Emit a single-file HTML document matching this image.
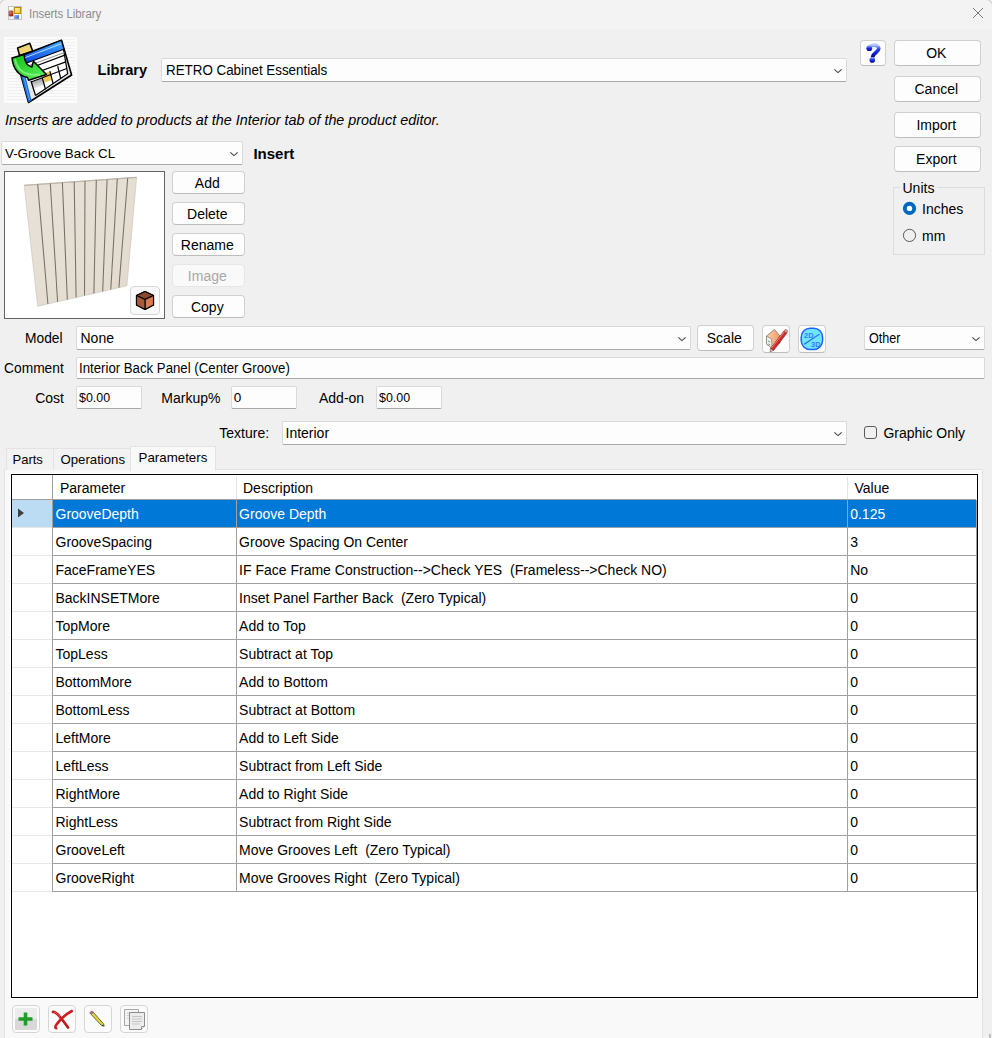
<!DOCTYPE html>
<html><head><meta charset="utf-8">
<style>
*{margin:0;padding:0;box-sizing:border-box}
html,body{width:992px;height:1038px;overflow:hidden;background:#f0f0f0;font-family:"Liberation Sans",sans-serif;color:#000}
.a{position:absolute}
svg.a{overflow:visible}
.t{position:absolute;white-space:pre;line-height:1;font-size:14px}
.btn{position:absolute;background:#fdfdfd;border:1px solid #d0d0d0;border-bottom-color:#bdbdbd;border-radius:4px}
.cb{position:absolute;background:#fdfdfd;border:1px solid #d9d9d9;border-bottom-color:#a8a8a8;border-radius:2px}
.tb{position:absolute;background:#fdfdfd;border:1px solid #d9d9d9;border-bottom-color:#a8a8a8;border-radius:2px}
</style></head><body>

<div class="a" style="left:0px;top:0px;width:992px;height:29px;background:#f3f3f3"></div>
<div class="t" style="left:28.6px;top:7.60px;font-size:12px;font-weight:normal;color:#8c8c8c;transform:scaleX(0.95);transform-origin:0 0;">Inserts Library</div>
<svg class="a" style="left:8px;top:6px" width="14" height="14" viewBox="0 0 14 14">
<defs><linearGradient id="ty" x1="0" y1="0" x2="1" y2="1"><stop offset="0" stop-color="#fff4c0"/><stop offset="1" stop-color="#ffc800"/></linearGradient>
<linearGradient id="tr" x1="0" y1="0" x2="1" y2="1"><stop offset="0" stop-color="#f5a0a0"/><stop offset="1" stop-color="#a00000"/></linearGradient>
<linearGradient id="tbl" x1="0" y1="0" x2="1" y2="1"><stop offset="0" stop-color="#a8c8ff"/><stop offset="1" stop-color="#2050d0"/></linearGradient></defs>
<rect x="0.5" y="0.5" width="13" height="13" fill="#fff" stroke="#c0c0c0"/>
<path d="M5.3 0 V14 M0 4.1 H5.3 M0 10.4 H5.3 M2.5 10.4 V14 M10.9 7.8 V14" stroke="#cfcfcf" stroke-width="0.8"/>
<rect x="6.6" y="1.5" width="6" height="6" fill="url(#ty)" stroke="#b88a00" stroke-width="1"/>
<rect x="1.1" y="5" width="3.8" height="4.9" rx="0.5" fill="url(#tr)" stroke="#a01010" stroke-width="0.6"/>
<rect x="6.1" y="9" width="4.8" height="3.7" fill="url(#tbl)"/>
</svg>
<svg class="a" style="left:972px;top:7px" width="12" height="12" viewBox="0 0 12 12"><path d="M1 1 L11 11 M11 1 L1 11" stroke="#7a7a7a" stroke-width="1"/></svg>
<svg class="a" style="left:4px;top:37px" width="73" height="66" viewBox="0 0 73 66">
<defs><linearGradient id="bb" x1="0" y1="1" x2="0.3" y2="0"><stop offset="0" stop-color="#0a3ad8"/><stop offset="1" stop-color="#3aa0ff"/></linearGradient>
<linearGradient id="ag" x1="0" y1="0" x2="1" y2="1"><stop offset="0" stop-color="#10c010"/><stop offset="1" stop-color="#60f060"/></linearGradient>
<linearGradient id="gc" x1="0" y1="0" x2="0.3" y2="1"><stop offset="0" stop-color="#8a8a8a"/><stop offset="1" stop-color="#f0f0f0"/></linearGradient></defs>
<rect width="73" height="66" fill="#fbfbfb"/>
<g stroke="#f0f0f0" stroke-width="1"><line x1="3" y1="2.5" x2="71" y2="2.5"/><line x1="3" y1="5.5" x2="71" y2="5.5"/><line x1="3" y1="8.5" x2="71" y2="8.5"/><line x1="3" y1="11.5" x2="71" y2="11.5"/><line x1="3" y1="14.5" x2="71" y2="14.5"/><line x1="3" y1="17.5" x2="71" y2="17.5"/><line x1="3" y1="20.5" x2="71" y2="20.5"/><line x1="3" y1="23.5" x2="71" y2="23.5"/><line x1="3" y1="26.5" x2="71" y2="26.5"/><line x1="3" y1="29.5" x2="71" y2="29.5"/><line x1="3" y1="32.5" x2="71" y2="32.5"/><line x1="3" y1="35.5" x2="71" y2="35.5"/><line x1="3" y1="38.5" x2="71" y2="38.5"/><line x1="3" y1="41.5" x2="71" y2="41.5"/><line x1="3" y1="44.5" x2="71" y2="44.5"/><line x1="3" y1="47.5" x2="71" y2="47.5"/><line x1="3" y1="50.5" x2="71" y2="50.5"/><line x1="3" y1="53.5" x2="71" y2="53.5"/><line x1="3" y1="56.5" x2="71" y2="56.5"/><line x1="3" y1="59.5" x2="71" y2="59.5"/><line x1="3" y1="62.5" x2="71" y2="62.5"/></g>
<path d="M13.6 11 L25.8 6.3 L28.7 14.3 L15.5 18.4 Z" fill="#f2d472" stroke="#000" stroke-width="1.6" stroke-linejoin="round"/>
<path d="M12 20.5 L57.5 3.3 L67.6 38 L24.5 65.5 Z" fill="#e6e6e6" stroke="#000" stroke-width="1.6" stroke-linejoin="round"/>
<path d="M20 27 L59.5 12.5 L63.7 36.8 L31.5 58.5 L27 44 Z" fill="#fff"/>
<path d="M59.5 12.5 L63.7 36.8 L31.5 58.5" fill="none" stroke="#000" stroke-width="1.2"/>
<path d="M12 20.5 L16.5 20 L27.5 63.5 L24.5 65.5 Z" fill="#1a6ad8"/>
<path d="M15 21 L25.5 63" stroke="#60b0ff" stroke-width="0.9"/>
<path d="M27 45.5 L38.5 41 L40.2 48 L28.8 52 Z" fill="url(#gc)"/>
<path d="M38.5 37 L45.6 34.3 L47.6 43 L40.6 45.6 Z" fill="#f0c850"/>
<path d="M16 19.5 L57.5 3.3 L59.8 12.2 L20 27 Z" fill="url(#bb)" stroke="#000" stroke-width="1.1" stroke-linejoin="round"/>
<path d="M19 21.5 L57 6.8" stroke="#c8e8ff" stroke-width="0.9"/>
<path d="M21 30 L60.3 15.6" stroke="#909090" stroke-width="1"/>
<g stroke="#000" stroke-width="1.25" fill="none">
<path d="M22.5 32.5 L60.8 18.2 M24.5 38.5 L61.8 24.8 M27 45 L62.8 31.5 M27 44 L31.5 58.5 M38.2 40.5 L41.5 52.3 M45.9 34.1 L49.2 47 M53.7 29.1 L56.8 41.8"/>
</g>
<path d="M8 21 C9 32 15 39 23.5 40.5 L24.6 43.2 L42.5 37.5 L29.4 24.3 L27.8 30 C23 29 20.5 24 20 17.5 Z" fill="url(#ag)" stroke="#000" stroke-width="1.5" stroke-linejoin="round"/>
<path d="M11 22 C12.5 31 18 36 26 37.5 L36 37.8" stroke="#a0ffa0" stroke-width="2" fill="none" opacity="0.6"/>
</svg>
<div class="t" style="left:97.6px;top:62.70px;font-size:14.6px;font-weight:bold;color:#000;">Library</div>
<div class="cb" style="left:161px;top:58px;width:686px;height:24px"></div>
<div class="t" style="left:165.5px;top:63.00px;font-size:14px;font-weight:normal;color:#000;transform:scaleX(0.955);transform-origin:0 0;">RETRO Cabinet Essentials</div>
<svg class="a" style="left:833px;top:68.0px" width="10" height="6" viewBox="0 0 10 6"><path d="M1.4 1.4 L5 4.6 L8.6 1.4" fill="none" stroke="#404040" stroke-width="1.05"/></svg>
<div class="btn" style="left:860px;top:40px;width:26px;height:26px;"></div>
<div class="t" style="left:858.8px;width:26px;text-align:center;top:-12.00px;font-size:14px;color:#000"></div>
<svg class="a" style="left:860px;top:40px" width="26" height="26" viewBox="0 0 26 26">
<defs><linearGradient id="qg" x1="0" y1="0" x2="0" y2="1"><stop offset="0" stop-color="#b8c8ff"/><stop offset="0.35" stop-color="#2040f0"/><stop offset="1" stop-color="#0008a0"/></linearGradient>
<linearGradient id="qd" x1="0" y1="0" x2="0" y2="1"><stop offset="0" stop-color="#a0c0ff"/><stop offset="0.5" stop-color="#1a30e0"/><stop offset="1" stop-color="#0008a0"/></linearGradient></defs>
<path d="M9.5 8 C9.5 4.5 18.8 3.8 18.8 8.5 C18.8 12 13.5 12.8 12.6 16.8" fill="none" stroke="url(#qg)" stroke-width="3.6" stroke-linecap="round"/>
<circle cx="9.3" cy="8.2" r="2.9" fill="url(#qd)"/>
<circle cx="12.3" cy="19.9" r="2.8" fill="url(#qd)"/>
</svg>
<div class="btn" style="left:894px;top:40px;width:87px;height:26px;"></div>
<div class="t" style="left:892.8px;width:87px;text-align:center;top:45.60px;font-size:14px;color:#000">OK</div>
<div class="btn" style="left:894px;top:76px;width:87px;height:26px;"></div>
<div class="t" style="left:892.8px;width:87px;text-align:center;top:81.60px;font-size:14px;color:#000">Cancel</div>
<div class="btn" style="left:894px;top:112px;width:87px;height:26px;"></div>
<div class="t" style="left:892.8px;width:87px;text-align:center;top:117.60px;font-size:14px;color:#000">Import</div>
<div class="btn" style="left:894px;top:146px;width:87px;height:26px;"></div>
<div class="t" style="left:892.8px;width:87px;text-align:center;top:151.60px;font-size:14px;color:#000">Export</div>
<div class="a" style="left:893px;top:187px;width:92px;height:68px;border:1px solid #dcdcdc"></div>
<div class="a" style="left:900px;top:180px;width:37px;height:15px;background:#f0f0f0"></div>
<div class="t" style="left:902.5px;top:180.50px;font-size:14px;font-weight:normal;color:#000;">Units</div>
<svg class="a" style="left:902px;top:201px" width="15" height="15" viewBox="0 0 15 15"><circle cx="7.5" cy="7.4" r="6.6" fill="#0067c0"/><circle cx="7.5" cy="7.4" r="2.7" fill="#fff"/></svg>
<div class="t" style="left:922.0px;top:201.50px;font-size:14px;font-weight:normal;color:#000;">Inches</div>
<svg class="a" style="left:902px;top:228px" width="15" height="15" viewBox="0 0 15 15"><circle cx="7.5" cy="7.4" r="6.1" fill="none" stroke="#5a5a5a" stroke-width="1"/></svg>
<div class="t" style="left:922.0px;top:228.50px;font-size:14px;font-weight:normal;color:#000;">mm</div>
<div class="t" style="left:4.8px;top:113.00px;font-size:14px;font-weight:normal;color:#000;font-style:italic;transform:scaleX(1.026);transform-origin:0 0;">Inserts are added to products at the Interior tab of the product editor.</div>
<div class="cb" style="left:1px;top:141px;width:242px;height:24px"></div>
<div class="t" style="left:5.0px;top:146.85px;font-size:13.3px;font-weight:normal;color:#000;">V-Groove Back CL</div>
<svg class="a" style="left:229px;top:151.0px" width="10" height="6" viewBox="0 0 10 6"><path d="M1.4 1.4 L5 4.6 L8.6 1.4" fill="none" stroke="#404040" stroke-width="1.05"/></svg>
<div class="t" style="left:253.4px;top:146.00px;font-size:15px;font-weight:bold;color:#000;">Insert</div>
<div class="a" style="left:4px;top:171px;width:161px;height:148px;background:#fff;border:1px solid #646464"></div>
<svg class="a" style="left:4px;top:171px" width="161" height="148" viewBox="0 0 161 148">
<defs><linearGradient id="pg" x1="0" y1="0" x2="1" y2="1"><stop offset="0" stop-color="#e8e2d9"/><stop offset="1" stop-color="#e2dacd"/></linearGradient></defs>
<path d="M20.2 14.3 L132.6 6.3 L122.9 114.8 L33.7 135.3 Z" fill="url(#pg)" stroke="#c8c0b4" stroke-width="0.6"/>
<path d="M20.2 14.3 L132.6 6.3" stroke="#bdb5a8" stroke-width="1.2"/>
<g stroke="#757169" stroke-width="1.05"><line x1="33.7" y1="13.339145907473323" x2="43.9" y2="132.95582959641257"/><line x1="46.3" y1="12.442348754448403" x2="53.6" y2="130.7265695067265"/><line x1="58.4" y1="11.581138790035595" x2="63.3" y2="128.49730941704036"/><line x1="70.2" y1="10.741281138790043" x2="72.1" y2="126.47488789237667"/><line x1="81" y1="9.972597864768687" x2="80.5" y2="124.54439461883408"/><line x1="92.3" y1="9.168327402135247" x2="89.9" y2="122.38408071748881"/><line x1="103.1" y1="8.399644128113891" x2="98.7" y2="120.36165919282513"/><line x1="113.3" y1="7.673665480427047" x2="106.8" y2="118.50011210762335"/><line x1="123.7" y1="6.933451957295375" x2="114.9" y2="116.63856502242152"/></g>
</svg>
<div class="a" style="left:130px;top:286px;width:30px;height:29px;background:#f9f9f9;border:1px solid #d6d6d6;border-radius:4px"></div>
<svg class="a" style="left:135px;top:290px" width="20" height="21" viewBox="0 0 20 21">
<path d="M10 1.5 L18.5 5.5 L18.5 15 L10 19.5 L1.5 15 L1.5 5.5 Z" fill="#9a5235" stroke="#000" stroke-width="1.2" stroke-linejoin="round"/>
<path d="M1.5 5.5 L10 9.5 L18.5 5.5 L10 1.5 Z" fill="#8b4a30" stroke="#000" stroke-width="1.1" stroke-linejoin="round"/>
<path d="M10 9.5 L18.5 5.5 L18.5 15 L10 19.5 Z" fill="#d87a52" stroke="#000" stroke-width="1.1" stroke-linejoin="round"/>
<path d="M1.5 5.5 L10 9.5 L10 19.5 L1.5 15 Z" fill="#a85a3a" stroke="#000" stroke-width="1.1" stroke-linejoin="round"/>
</svg>
<div class="btn" style="left:172px;top:171px;width:73px;height:23px;"></div>
<div class="t" style="left:170.8px;width:73px;text-align:center;top:176.20px;font-size:14px;color:#000">Add</div>
<div class="btn" style="left:172px;top:202px;width:73px;height:23px;"></div>
<div class="t" style="left:170.8px;width:73px;text-align:center;top:207.00px;font-size:14px;color:#000">Delete</div>
<div class="btn" style="left:172px;top:233px;width:73px;height:23px;"></div>
<div class="t" style="left:170.8px;width:73px;text-align:center;top:238.00px;font-size:14px;color:#000">Rename</div>
<div class="btn" style="left:172px;top:264px;width:73px;height:23px;background:#f9f9f9;border-color:#e6e6e6"></div>
<div class="t" style="left:170.8px;width:73px;text-align:center;top:269.00px;font-size:14px;color:#a8a8a8">Image</div>
<div class="btn" style="left:172px;top:295px;width:73px;height:23px;"></div>
<div class="t" style="left:170.8px;width:73px;text-align:center;top:300.00px;font-size:14px;color:#000">Copy</div>
<div class="t" style="left:25.0px;top:331.60px;font-size:13.8px;font-weight:normal;color:#000;">Model</div>
<div class="cb" style="left:76px;top:326px;width:615px;height:24px"></div>
<div class="t" style="left:80.5px;top:331.00px;font-size:14px;font-weight:normal;color:#000;">None</div>
<svg class="a" style="left:676.8px;top:336.0px" width="10" height="6" viewBox="0 0 10 6"><path d="M1.4 1.4 L5 4.6 L8.6 1.4" fill="none" stroke="#404040" stroke-width="1.05"/></svg>
<div class="btn" style="left:697px;top:325px;width:57px;height:26px;"></div>
<div class="t" style="left:695.8px;width:57px;text-align:center;top:331.00px;font-size:14px;color:#000">Scale</div>
<div class="btn" style="left:762px;top:325px;width:28px;height:28px;"></div>
<div class="t" style="left:760.8px;width:28px;text-align:center;top:-12.00px;font-size:14px;color:#000"></div>
<div class="btn" style="left:798px;top:325px;width:28px;height:28px;"></div>
<div class="t" style="left:796.8px;width:28px;text-align:center;top:-12.00px;font-size:14px;color:#000"></div>
<svg class="a" style="left:762px;top:326px" width="28" height="28" viewBox="0 0 28 28">
<defs><linearGradient id="rf" x1="0" y1="0" x2="1" y2="0"><stop offset="0" stop-color="#f8d0b0"/><stop offset="1" stop-color="#f09860"/></linearGradient></defs>
<path d="M4.5 10 L12.5 3.5 L18 10 L18 17 L10 22 L4.5 18 Z" fill="url(#rf)" stroke="#8a7a6a" stroke-width="0.8" stroke-linejoin="round"/>
<path d="M4.5 10 L9.5 13 L10 22 L4.5 18 Z" fill="#f2eeea" stroke="#8a7a6a" stroke-width="0.7"/>
<path d="M6 15 L8 16 M6.5 18 L8 19" stroke="#60a070" stroke-width="1"/>
<path d="M8.5 22.5 L22 5 L25 7 L11.5 24.5 Z" fill="#d02a2a" stroke="#902020" stroke-width="0.7" stroke-linejoin="round"/>
<path d="M9.5 22 L22.5 5.5" stroke="#f0a0a0" stroke-width="0.8"/>
<path d="M22 5 L23 3.6 C23.8 3 25.5 4 25.8 5 L25 7 Z" fill="#e09090" stroke="#906060" stroke-width="0.6"/>
<path d="M8.5 22.5 L11.5 24.5 L8 26 Z" fill="#d8c0b0" stroke="#604040" stroke-width="0.5"/>
</svg>
<svg class="a" style="left:800px;top:327px" width="24" height="24" viewBox="0 0 24 24">
<rect x="1.2" y="1.2" width="21.4" height="21.4" rx="9" fill="#6ee6ff" stroke="#2060ff" stroke-width="1.5"/>
<path d="M4.2 17.2 L19.5 7.1" stroke="#2a5ae8" stroke-width="1.1"/>
<text x="4" y="11" font-size="7.5" font-weight="bold" fill="#3a78ff" font-family="Liberation Sans">2D</text>
<text x="11" y="20" font-size="7.5" font-weight="bold" fill="#3a78ff" font-family="Liberation Sans">3D</text>
</svg>
<div class="cb" style="left:864px;top:326px;width:121px;height:24px"></div>
<div class="t" style="left:868.5px;top:331.00px;font-size:14px;font-weight:normal;color:#000;transform:scaleX(0.9);transform-origin:0 0;">Other</div>
<svg class="a" style="left:971px;top:336.0px" width="10" height="6" viewBox="0 0 10 6"><path d="M1.4 1.4 L5 4.6 L8.6 1.4" fill="none" stroke="#404040" stroke-width="1.05"/></svg>
<div class="t" style="left:4.0px;top:361.60px;font-size:13.8px;font-weight:normal;color:#000;">Comment</div>
<div class="tb" style="left:76px;top:357px;width:909px;height:22px"></div>
<div class="t" style="left:78.5px;top:361.00px;font-size:14px;font-weight:normal;color:#000;transform:scaleX(0.944);transform-origin:0 0;">Interior Back Panel (Center Groove)</div>
<div class="t" style="left:35.2px;top:391.00px;font-size:14px;font-weight:normal;color:#000;">Cost</div>
<div class="tb" style="left:76px;top:386px;width:66px;height:23px"></div>
<div class="t" style="left:79.0px;top:390.75px;font-size:13.5px;font-weight:normal;color:#000;transform:scaleX(0.92);transform-origin:0 0;">$0.00</div>
<div class="t" style="left:161.3px;top:391.00px;font-size:14px;font-weight:normal;color:#000;">Markup%</div>
<div class="tb" style="left:231px;top:386px;width:66px;height:23px"></div>
<div class="t" style="left:233.8px;top:390.75px;font-size:13.5px;font-weight:normal;color:#000;">0</div>
<div class="t" style="left:319.0px;top:391.00px;font-size:14px;font-weight:normal;color:#000;">Add-on</div>
<div class="tb" style="left:376px;top:386px;width:66px;height:23px"></div>
<div class="t" style="left:378.5px;top:390.75px;font-size:13.5px;font-weight:normal;color:#000;transform:scaleX(0.92);transform-origin:0 0;">$0.00</div>
<div class="t" style="left:219.3px;top:426.00px;font-size:14px;font-weight:normal;color:#000;">Texture:</div>
<div class="cb" style="left:282px;top:421px;width:565px;height:24px"></div>
<div class="t" style="left:285.5px;top:426.00px;font-size:14px;font-weight:normal;color:#000;">Interior</div>
<svg class="a" style="left:832.5px;top:431.0px" width="10" height="6" viewBox="0 0 10 6"><path d="M1.4 1.4 L5 4.6 L8.6 1.4" fill="none" stroke="#404040" stroke-width="1.05"/></svg>
<div class="a" style="left:864px;top:426px;width:13px;height:13px;background:transparent;border:1px solid #5a5a5a;border-radius:3px"></div>
<div class="t" style="left:883.4px;top:426.00px;font-size:14px;font-weight:normal;color:#000;">Graphic Only</div>
<div class="a" style="left:4px;top:469px;width:979px;height:569px;background:#f9f9f9;border:1px solid #e3e3e3;border-bottom:none"></div>
<div class="a" style="left:6px;top:448px;width:48px;height:22px;background:#f2f2f2;border:1px solid #e3e3e3;border-bottom:none"></div>
<div class="a" style="left:53px;top:448px;width:78px;height:22px;background:#f2f2f2;border:1px solid #e3e3e3;border-bottom:none"></div>
<div class="a" style="left:130px;top:446px;width:86px;height:25px;background:#f9f9f9;border:1px solid #e3e3e3;border-bottom:none"></div>
<div class="t" style="left:12.5px;top:453.00px;font-size:13px;font-weight:normal;color:#000;">Parts</div>
<div class="t" style="left:60.5px;top:452.90px;font-size:13.2px;font-weight:normal;color:#000;">Operations</div>
<div class="t" style="left:138.6px;top:450.85px;font-size:13.3px;font-weight:normal;color:#000;">Parameters</div>
<div class="a" style="left:10px;top:473px;width:969px;height:526px;border:1px solid #fff"></div>
<div class="a" style="left:11px;top:474px;width:967px;height:524px;background:#fff;border:1px solid #000"></div>
<div class="a" style="left:12px;top:499px;width:964px;height:1px;background:#a0a0a0"></div>
<div class="a" style="left:976px;top:500px;width:1px;height:392px;background:#a0a0a0"></div>
<div class="a" style="left:52px;top:475px;width:1px;height:417px;background:#a0a0a0"></div>
<div class="a" style="left:236px;top:477px;width:1px;height:22px;background:#e3e3e3"></div>
<div class="a" style="left:236px;top:500px;width:1px;height:392px;background:#a0a0a0"></div>
<div class="a" style="left:847px;top:477px;width:1px;height:22px;background:#e3e3e3"></div>
<div class="a" style="left:847px;top:500px;width:1px;height:392px;background:#a0a0a0"></div>
<div class="t" style="left:59.9px;top:481.00px;font-size:14px;font-weight:normal;color:#000;">Parameter</div>
<div class="t" style="left:243.0px;top:481.00px;font-size:14px;font-weight:normal;color:#000;">Description</div>
<div class="t" style="left:854.5px;top:481.00px;font-size:14px;font-weight:normal;color:#000;">Value</div>
<div class="a" style="left:12px;top:500px;width:40px;height:27px;background:#bcdcf4"></div>
<div class="a" style="left:53px;top:500px;width:183px;height:27px;background:#0078d7"></div>
<div class="a" style="left:237px;top:500px;width:610px;height:27px;background:#0078d7"></div>
<div class="a" style="left:848px;top:500px;width:128px;height:27px;background:#0078d7"></div>
<svg class="a" style="left:17px;top:508px" width="8" height="11" viewBox="0 0 8 11"><path d="M1 0.5 L7 5 L1 9.5 Z" fill="#404040"/></svg>
<div class="a" style="left:12px;top:527px;width:40px;height:1px;background:#e8e8e8"></div>
<div class="a" style="left:53px;top:527px;width:923px;height:1px;background:#a0a0a0"></div>
<div class="t" style="left:55.5px;top:507.00px;font-size:14px;font-weight:normal;color:#fff;">GrooveDepth</div>
<div class="t" style="left:239.1px;top:507.00px;font-size:14px;font-weight:normal;color:#fff;">Groove Depth</div>
<div class="t" style="left:850.2px;top:507.00px;font-size:14px;font-weight:normal;color:#fff;">0.125</div>
<div class="a" style="left:12px;top:555px;width:40px;height:1px;background:#e8e8e8"></div>
<div class="a" style="left:53px;top:555px;width:923px;height:1px;background:#a0a0a0"></div>
<div class="t" style="left:55.5px;top:535.00px;font-size:14px;font-weight:normal;color:#000;">GrooveSpacing</div>
<div class="t" style="left:239.1px;top:535.00px;font-size:14px;font-weight:normal;color:#000;">Groove Spacing On Center</div>
<div class="t" style="left:850.2px;top:535.00px;font-size:14px;font-weight:normal;color:#000;">3</div>
<div class="a" style="left:12px;top:583px;width:40px;height:1px;background:#e8e8e8"></div>
<div class="a" style="left:53px;top:583px;width:923px;height:1px;background:#a0a0a0"></div>
<div class="t" style="left:55.5px;top:563.00px;font-size:14px;font-weight:normal;color:#000;">FaceFrameYES</div>
<div class="t" style="left:239.1px;top:563.00px;font-size:14px;font-weight:normal;color:#000;">IF Face Frame Construction-->Check YES  (Frameless-->Check NO)</div>
<div class="t" style="left:850.2px;top:563.00px;font-size:14px;font-weight:normal;color:#000;">No</div>
<div class="a" style="left:12px;top:611px;width:40px;height:1px;background:#e8e8e8"></div>
<div class="a" style="left:53px;top:611px;width:923px;height:1px;background:#a0a0a0"></div>
<div class="t" style="left:55.5px;top:591.00px;font-size:14px;font-weight:normal;color:#000;">BackINSETMore</div>
<div class="t" style="left:239.1px;top:591.00px;font-size:14px;font-weight:normal;color:#000;">Inset Panel Farther Back  (Zero Typical)</div>
<div class="t" style="left:850.2px;top:591.00px;font-size:14px;font-weight:normal;color:#000;">0</div>
<div class="a" style="left:12px;top:639px;width:40px;height:1px;background:#e8e8e8"></div>
<div class="a" style="left:53px;top:639px;width:923px;height:1px;background:#a0a0a0"></div>
<div class="t" style="left:55.5px;top:619.00px;font-size:14px;font-weight:normal;color:#000;">TopMore</div>
<div class="t" style="left:239.1px;top:619.00px;font-size:14px;font-weight:normal;color:#000;">Add to Top</div>
<div class="t" style="left:850.2px;top:619.00px;font-size:14px;font-weight:normal;color:#000;">0</div>
<div class="a" style="left:12px;top:667px;width:40px;height:1px;background:#e8e8e8"></div>
<div class="a" style="left:53px;top:667px;width:923px;height:1px;background:#a0a0a0"></div>
<div class="t" style="left:55.5px;top:647.00px;font-size:14px;font-weight:normal;color:#000;">TopLess</div>
<div class="t" style="left:239.1px;top:647.00px;font-size:14px;font-weight:normal;color:#000;">Subtract at Top</div>
<div class="t" style="left:850.2px;top:647.00px;font-size:14px;font-weight:normal;color:#000;">0</div>
<div class="a" style="left:12px;top:695px;width:40px;height:1px;background:#e8e8e8"></div>
<div class="a" style="left:53px;top:695px;width:923px;height:1px;background:#a0a0a0"></div>
<div class="t" style="left:55.5px;top:675.00px;font-size:14px;font-weight:normal;color:#000;">BottomMore</div>
<div class="t" style="left:239.1px;top:675.00px;font-size:14px;font-weight:normal;color:#000;">Add to Bottom</div>
<div class="t" style="left:850.2px;top:675.00px;font-size:14px;font-weight:normal;color:#000;">0</div>
<div class="a" style="left:12px;top:723px;width:40px;height:1px;background:#e8e8e8"></div>
<div class="a" style="left:53px;top:723px;width:923px;height:1px;background:#a0a0a0"></div>
<div class="t" style="left:55.5px;top:703.00px;font-size:14px;font-weight:normal;color:#000;">BottomLess</div>
<div class="t" style="left:239.1px;top:703.00px;font-size:14px;font-weight:normal;color:#000;">Subtract at Bottom</div>
<div class="t" style="left:850.2px;top:703.00px;font-size:14px;font-weight:normal;color:#000;">0</div>
<div class="a" style="left:12px;top:751px;width:40px;height:1px;background:#e8e8e8"></div>
<div class="a" style="left:53px;top:751px;width:923px;height:1px;background:#a0a0a0"></div>
<div class="t" style="left:55.5px;top:731.00px;font-size:14px;font-weight:normal;color:#000;">LeftMore</div>
<div class="t" style="left:239.1px;top:731.00px;font-size:14px;font-weight:normal;color:#000;">Add to Left Side</div>
<div class="t" style="left:850.2px;top:731.00px;font-size:14px;font-weight:normal;color:#000;">0</div>
<div class="a" style="left:12px;top:779px;width:40px;height:1px;background:#e8e8e8"></div>
<div class="a" style="left:53px;top:779px;width:923px;height:1px;background:#a0a0a0"></div>
<div class="t" style="left:55.5px;top:759.00px;font-size:14px;font-weight:normal;color:#000;">LeftLess</div>
<div class="t" style="left:239.1px;top:759.00px;font-size:14px;font-weight:normal;color:#000;">Subtract from Left Side</div>
<div class="t" style="left:850.2px;top:759.00px;font-size:14px;font-weight:normal;color:#000;">0</div>
<div class="a" style="left:12px;top:807px;width:40px;height:1px;background:#e8e8e8"></div>
<div class="a" style="left:53px;top:807px;width:923px;height:1px;background:#a0a0a0"></div>
<div class="t" style="left:55.5px;top:787.00px;font-size:14px;font-weight:normal;color:#000;">RightMore</div>
<div class="t" style="left:239.1px;top:787.00px;font-size:14px;font-weight:normal;color:#000;">Add to Right Side</div>
<div class="t" style="left:850.2px;top:787.00px;font-size:14px;font-weight:normal;color:#000;">0</div>
<div class="a" style="left:12px;top:835px;width:40px;height:1px;background:#e8e8e8"></div>
<div class="a" style="left:53px;top:835px;width:923px;height:1px;background:#a0a0a0"></div>
<div class="t" style="left:55.5px;top:815.00px;font-size:14px;font-weight:normal;color:#000;">RightLess</div>
<div class="t" style="left:239.1px;top:815.00px;font-size:14px;font-weight:normal;color:#000;">Subtract from Right Side</div>
<div class="t" style="left:850.2px;top:815.00px;font-size:14px;font-weight:normal;color:#000;">0</div>
<div class="a" style="left:12px;top:863px;width:40px;height:1px;background:#e8e8e8"></div>
<div class="a" style="left:53px;top:863px;width:923px;height:1px;background:#a0a0a0"></div>
<div class="t" style="left:55.5px;top:843.00px;font-size:14px;font-weight:normal;color:#000;">GrooveLeft</div>
<div class="t" style="left:239.1px;top:843.00px;font-size:14px;font-weight:normal;color:#000;">Move Grooves Left  (Zero Typical)</div>
<div class="t" style="left:850.2px;top:843.00px;font-size:14px;font-weight:normal;color:#000;">0</div>
<div class="a" style="left:12px;top:891px;width:40px;height:1px;background:#e8e8e8"></div>
<div class="a" style="left:53px;top:891px;width:923px;height:1px;background:#a0a0a0"></div>
<div class="t" style="left:55.5px;top:871.00px;font-size:14px;font-weight:normal;color:#000;">GrooveRight</div>
<div class="t" style="left:239.1px;top:871.00px;font-size:14px;font-weight:normal;color:#000;">Move Grooves Right  (Zero Typical)</div>
<div class="t" style="left:850.2px;top:871.00px;font-size:14px;font-weight:normal;color:#000;">0</div>
<div class="a" style="left:12px;top:1005px;width:28px;height:28px;background:#fbfbfb;border:1px solid #d6d6d6;border-radius:4px"></div>
<div class="a" style="left:48px;top:1005px;width:28px;height:28px;background:#fbfbfb;border:1px solid #d6d6d6;border-radius:4px"></div>
<div class="a" style="left:84px;top:1005px;width:28px;height:28px;background:#fbfbfb;border:1px solid #d6d6d6;border-radius:4px"></div>
<div class="a" style="left:120px;top:1005px;width:28px;height:28px;background:#fbfbfb;border:1px solid #d6d6d6;border-radius:4px"></div>
<div class="a" style="left:15px;top:1008px;width:22px;height:11px;background:#ececec"></div>
<div class="a" style="left:15px;top:1019px;width:22px;height:11px;background:#d8d8d8"></div>
<svg class="a" style="left:18px;top:1012px" width="15" height="14" viewBox="0 0 15 14"><path d="M5.7 0.5 H9.3 V5.2 H14.5 V8.8 H9.3 V13.5 H5.7 V8.8 H0.5 V5.2 H5.7 Z" fill="#1e9e28"/></svg>
<svg class="a" style="left:50px;top:1008px" width="24" height="22" viewBox="0 0 24 22">
<path d="M3 4 C5 3.5 7.5 6 10 9 C13 12.5 15.5 16 18 19.5" stroke="#c41818" stroke-width="2.7" fill="none" stroke-linecap="round"/>
<path d="M21.8 3 C16 6 10.5 11 6.5 16.5 C5 18.5 5 20 6.2 20.2" stroke="#d01c1c" stroke-width="2.6" fill="none" stroke-linecap="round"/>
<path d="M4 3.8 C6 4.2 8 6.5 10 9" stroke="#f08080" stroke-width="0.7" fill="none"/>
</svg>
<svg class="a" style="left:87px;top:1009px" width="22" height="20" viewBox="0 0 22 20">
<path d="M4 5.2 L6.2 3.2 L16.5 14.8 L17.2 17.2 L14.5 16.5 Z" fill="#e6dc30" stroke="#555540" stroke-width="0.9" stroke-linejoin="round"/>
<path d="M4 5.2 L6.2 3.2 L5.2 2.3 C4.4 1.8 3 3 3 4 Z" fill="#d07090" stroke="#7a5060" stroke-width="0.8"/>
<path d="M15.3 15.6 L17.2 17.2 L14.9 16.7 Z" fill="#222"/>
</svg>
<svg class="a" style="left:122px;top:1007px" width="24" height="24" viewBox="0 0 24 24">
<path d="M2.5 2.5 H16.5 V18.5 H2.5 Z" fill="#f4f4f4" stroke="#a8a8a8"/>
<g stroke="#d0d0d0"><line x1="4.5" y1="6" x2="9" y2="6"/><line x1="4.5" y1="8.5" x2="9" y2="8.5"/><line x1="4.5" y1="11" x2="9" y2="11"/></g>
<path d="M7.5 5.5 H22.5 V19.5 L19.5 22.5 H7.5 Z" fill="#ececec" stroke="#8c8c8c"/>
<path d="M22.5 19.5 L19.5 19.5 L19.5 22.5" fill="#fff" stroke="#8c8c8c"/>
<g stroke="#c4c4c4"><line x1="10" y1="9.5" x2="20" y2="9.5"/><line x1="10" y1="12" x2="20" y2="12"/><line x1="10" y1="14.5" x2="20" y2="14.5"/><line x1="10" y1="17" x2="18" y2="17"/></g>
</svg>
<svg class="a" style="left:0;top:0" width="4" height="4"><path d="M0.5 3.5 A3 3 0 0 1 3.5 0.5" stroke="#c8c8c8" fill="none"/></svg>
<svg class="a" style="left:988px;top:0" width="4" height="4"><path d="M0.5 0.5 A3 3 0 0 1 3.5 3.5" stroke="#c8c8c8" fill="none"/></svg>
<div class="a" style="left:989px;top:1034px;width:2px;height:4px;background:#bdbdbd"></div>
</body></html>
